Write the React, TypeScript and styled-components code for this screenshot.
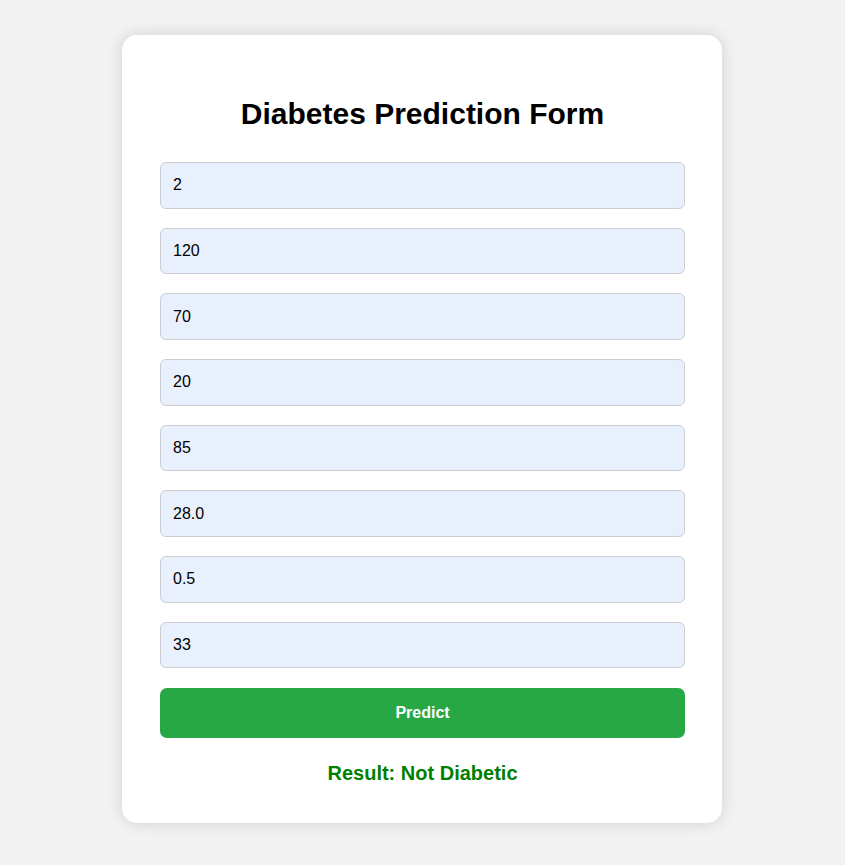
import React from 'react';
import styled, { createGlobalStyle } from 'styled-components';

const GlobalStyle = createGlobalStyle`
  html, body {
    margin: 0;
    padding: 0;
    background: #f2f2f2;
    font-family: 'Liberation Sans', Arial, sans-serif;
  }
`;

const Page = styled.div`
  padding: 35px 1px 40px 0;
`;

const Card = styled.div`
  width: 600px;
  box-sizing: border-box;
  margin: 0 auto;
  padding: 38px 37px 38px 38px;
  background: #fff;
  border-radius: 15px;
  box-shadow: 0 0 16px rgba(0, 0, 0, 0.14);
`;

const Title = styled.h2`
  margin: 24px 0 31px;
  font-size: 30px;
  font-weight: bold;
  color: #000;
  text-align: center;
`;

const Form = styled.form`
  display: flex;
  flex-direction: column;
  gap: 19.2px;
`;

const Field = styled.input`
  box-sizing: border-box;
  width: 100%;
  height: 46.5px;
  padding: 0 12px;
  background: #e8f0fe;
  border: 1px solid #cbcdd3;
  border-radius: 6px;
  font-family: 'Liberation Sans', Arial, sans-serif;
  font-size: 16px;
  color: #000;
  outline: none;
`;

const Button = styled.button`
  height: 50px;
  border: none;
  border-radius: 7px;
  background: #28a745;
  color: #fff;
  font-family: 'Liberation Sans', Arial, sans-serif;
  font-size: 16px;
  font-weight: bold;
  cursor: pointer;
`;

const Result = styled.div`
  margin-top: 24.5px;
  text-align: center;
  font-size: 20px;
  font-weight: bold;
  color: #008000;
`;

const values = ['2', '120', '70', '20', '85', '28.0', '0.5', '33'];

export default function App() {
  return (
    <Page>
      <GlobalStyle />
      <Card>
        <Title>Diabetes Prediction Form</Title>
        <Form onSubmit={(e) => e.preventDefault()}>
          {values.map((v, i) => (
            <Field key={i} type="text" defaultValue={v} />
          ))}
          <Button type="submit">Predict</Button>
        </Form>
        <Result>Result: Not Diabetic</Result>
      </Card>
    </Page>
  );
}
